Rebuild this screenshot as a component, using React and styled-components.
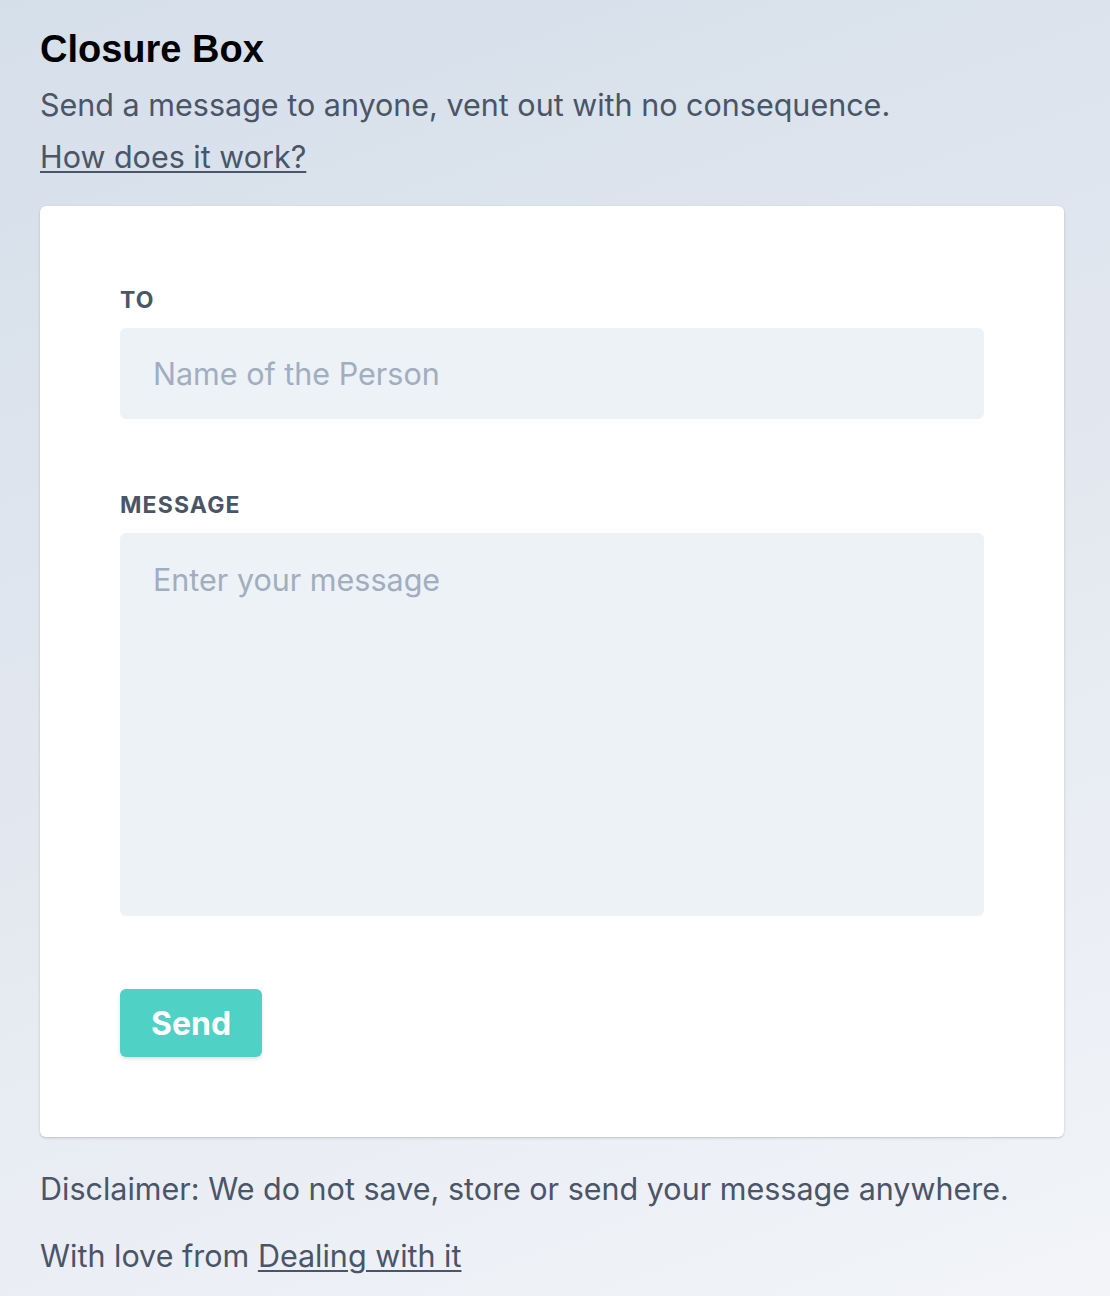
import React from 'react';
import styled, { createGlobalStyle } from 'styled-components';

const GlobalStyle = createGlobalStyle`
  html, body {
    margin: 0;
    padding: 0;
  }
  body {
    font-family: Inter, "Noto Sans", sans-serif;
    color: #4a5568;
    background: linear-gradient(160deg, #d5dfea 0%, #e3e8f0 50%, #f2f4f8 100%);
    min-height: 1296px;
  }
`;

const Page = styled.div`
  min-height: 1296px;
  box-sizing: border-box;
  padding: 26px 40px 0;
  width: 1104px;
`;

const Title = styled.h1`
  margin: 0;
  font-family: "Liberation Sans", Arial, sans-serif;
  font-weight: 700;
  font-size: 38px;
  line-height: 46px;
  color: #000;
`;

const Lead = styled.p`
  margin: 7px 0 0;
  font-size: 30.5px;
  line-height: 52px;
  color: #4a5568;
`;

const Link = styled.a`
  color: #4a5568;
  text-decoration: underline;
  text-underline-offset: 3px;
  text-decoration-thickness: 2px;
`;

const Card = styled.form`
  margin-top: 23px;
  background: #fff;
  border-radius: 6px;
  box-shadow: 0 1px 3px rgba(0, 0, 0, 0.12), 0 1px 2px rgba(0, 0, 0, 0.08);
  padding: 80px 80px 80px;
  width: 1024px;
  box-sizing: border-box;
`;

const Field = styled.div`
  display: flex;
  flex-direction: column;
  gap: 14px;
  margin-bottom: ${(p) => p.$gap || 0}px;
`;

const Label = styled.label`
  font-size: 23px;
  line-height: 28px;
  font-weight: 700;
  letter-spacing: 0.05em;
  text-transform: uppercase;
  color: #4a5568;
`;

const fieldStyle = `
  width: 100%;
  box-sizing: border-box;
  border: none;
  outline: none;
  background: #edf2f7;
  border-radius: 6px;
  padding: 0 33px;
  font-family: Inter, "Noto Sans", sans-serif;
  font-size: 30.5px;
  color: #4a5568;
  &::placeholder {
    color: #a0aec0;
    opacity: 1;
  }
`;

const Input = styled.input`
  ${fieldStyle}
  height: 91px;
`;

const TextArea = styled.textarea`
  ${fieldStyle}
  height: 383px;
  padding-top: 27px;
  resize: none;
  line-height: 40px;
`;

const SendButton = styled.button`
  margin-top: 73px;
  width: 142px;
  height: 68px;
  border: none;
  border-radius: 6px;
  background: #4fd1c5;
  color: #fff;
  font-family: Inter, "Noto Sans", sans-serif;
  font-weight: 700;
  font-size: 32px;
  box-shadow: 0 2px 4px rgba(0, 0, 0, 0.12);
  cursor: pointer;
`;

const Note = styled.p`
  margin: ${(p) => p.$top}px 0 0;
  font-size: 30.5px;
  line-height: 40px;
`;

export default function App() {
  return (
    <>
      <GlobalStyle />
      <Page>
        <Title>Closure Box</Title>
        <Lead>
          Send a message to anyone, vent out with no consequence.
          <br />
          <Link href="#">How does it work?</Link>
        </Lead>

        <Card onSubmit={(e) => e.preventDefault()}>
          <Field $gap={72}>
            <Label htmlFor="to">To</Label>
            <Input id="to" type="text" placeholder="Name of the Person" />
          </Field>
          <Field>
            <Label htmlFor="message">Message</Label>
            <TextArea id="message" placeholder="Enter your message" />
          </Field>
          <SendButton type="submit">Send</SendButton>
        </Card>

        <Note $top={32}>Disclaimer: We do not save, store or send your message anywhere.</Note>
        <Note $top={27}>
          With love from <Link href="#">Dealing with it</Link>
        </Note>
      </Page>
    </>
  );
}
